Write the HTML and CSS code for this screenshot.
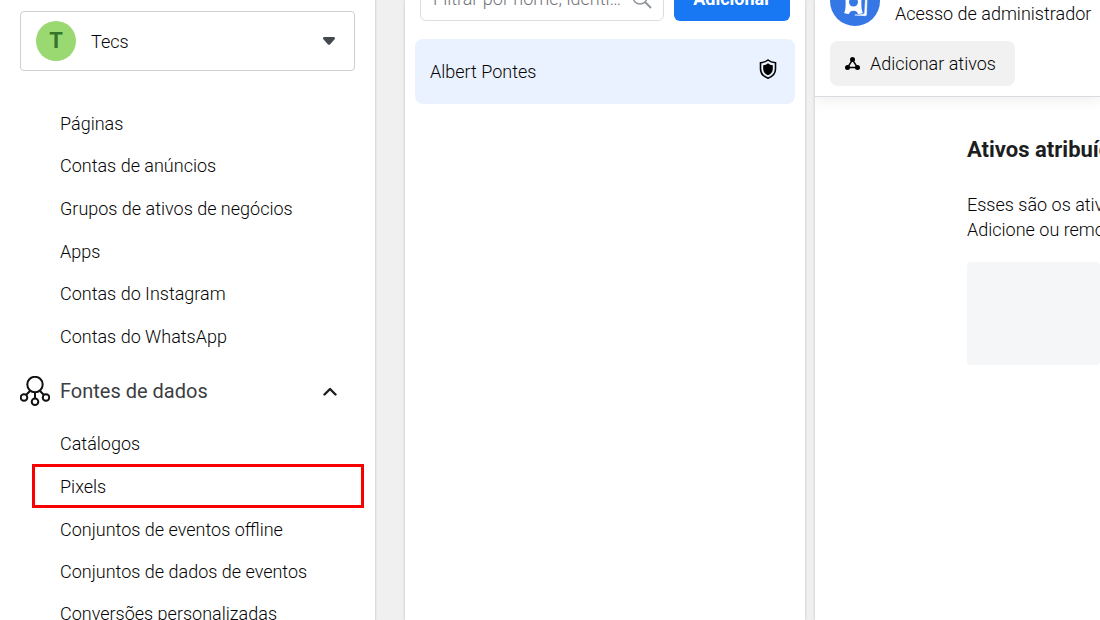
FILE: index.html
```html
<!DOCTYPE html>
<html lang="pt-BR">
<head>
    <meta charset="UTF-8">
    <meta name="viewport" content="width=device-width, initial-scale=1.0">
    <title>Configurações do negócio</title>
    <link rel="stylesheet" href="styles.css">
</head>
<body>
    <nav class="sidebar">
        <button class="account" type="button">
            <span class="account-logo">T</span>
            <span class="account-name">Tecs</span>
            <svg class="caret" width="12" height="8" viewBox="0 0 12 8"><path d="M1.5 0h9q1.5 0 1.5 1.200q0 .8-.6 1.400L7.200 7.200Q6 8.200 4.800 7.200L.6 2.600Q0 2 0 1.200Q0 0 1.500 0z" fill="#444950"/></svg>
        </button>

        <ul class="menu menu-accounts">
            <li><a href="#">Páginas</a></li>
            <li><a href="#">Contas de anúncios</a></li>
            <li><a href="#">Grupos de ativos de negócios</a></li>
            <li><a href="#">Apps</a></li>
            <li><a href="#">Contas do Instagram</a></li>
            <li><a href="#">Contas do WhatsApp</a></li>
        </ul>

        <button class="section" type="button">
            <svg width="30" height="30" viewBox="0 0 30 30" fill="none" stroke="#111" stroke-width="2">
                <circle cx="15" cy="8.500" r="7.700"/>
                <circle cx="4" cy="21.500" r="3.300"/>
                <circle cx="26" cy="21.500" r="3.300"/>
                <circle cx="15" cy="25.700" r="3.300"/>
                <path d="M10 15l-4 4M20 15l4 4M15 16.500v6"/>
            </svg>
            <span class="section-name">Fontes de dados</span>
            <svg class="chevron" width="14" height="9" viewBox="0 0 14 9" fill="none" stroke="#1c1e21" stroke-width="2.400"><path d="M1.500 7.500L7 2l5.500 5.500" stroke-linecap="round" stroke-linejoin="round"/></svg>
        </button>

        <ul class="menu menu-sources">
            <li><a href="#">Catálogos</a></li>
            <li><a class="marked" href="#">Pixels</a></li>
            <li><a href="#">Conjuntos de eventos offline</a></li>
            <li><a href="#">Conjuntos de dados de eventos</a></li>
            <li><a href="#">Conversões personalizadas</a></li>
        </ul>
    </nav>

    <section class="people">
        <div class="toolbar">
            <div class="search">
                <input type="text" placeholder="Filtrar por nome, identificação" aria-label="Filtrar por nome">
                <svg width="20" height="20" viewBox="0 0 20 20" fill="none" stroke="#90949c"><circle cx="8" cy="8" r="7" stroke-width="1.500"/><path d="M13 13l6 6" stroke-width="2"/></svg>
            </div>
            <button class="add" type="button">Adicionar</button>
        </div>
        <button class="person" type="button">
            <span>Albert Pontes</span>
            <svg width="18" height="20" viewBox="0 0 18 20"><path d="M9 1C7 2.700 4 3.500 1.500 3.700V10c0 4.300 3 7.500 7.500 9.200 4.500-1.700 7.500-4.900 7.500-9.200V3.700C14 3.500 11 2.700 9 1z" fill="none" stroke="#050505" stroke-width="1.600"/><path d="M9 4.200C7.700 5.400 6 6 4.200 6.200V10c0 2.900 1.800 5 4.800 6.300 3-1.300 4.800-3.400 4.800-6.300V6.200C12 6 10.300 5.400 9 4.200z"/></svg>
        </button>
    </section>

    <main class="details">
        <header class="profile">
            <div class="profile-row">
                <svg width="50" height="50" viewBox="0 0 50 50">
                    <circle cx="25" cy="25" r="25" fill="#3578e5"/>
                    <path d="M14 37c2.500.8 4 1 5 1 .5-4.500 8.500-4.500 9 0 1.500 0 3-.2 5-1-1.600-3-1.800-6-1.500-15h-16c.3 9 .1 12-1.500 15z" fill="#fff"/>
                    <circle cx="23.500" cy="26" r="4.500" fill="#3578e5"/>
                    <path d="M35.500 22l1.500 1-.5 15.500q0 1.200-1.200 1.200l-10.500-.7q6 0 8.500-.7 1.200-.4 1.400-1.800z" fill="#fff" stroke="#fff" stroke-width=".6"/>
                </svg>
                <p>Acesso de administrador</p>
            </div>
            <button class="assets" type="button">
                <svg width="15" height="13" viewBox="0 0 15 13"><path d="M7.500 2.800L2.500 10.500h10z" fill="none" stroke="#050505" stroke-width="1.500"/><circle cx="7.500" cy="2.500" r="2.500"/><circle cx="2.500" cy="10.500" r="2.500"/><circle cx="12.500" cy="10.500" r="2.500"/></svg>
                Adicionar ativos
            </button>
        </header>
        <div class="assigned">
            <h2>Ativos atribuídos</h2>
            <p>Esses são os ativos<br>Adicione ou remova</p>
            <div class="placeholder"></div>
        </div>
    </main>
</body>
</html>
```

FILE: styles.css
```css
* {
    box-sizing: border-box;
}
body {
    display: flex;
    height: 100vh;
    margin: 0;
    overflow: hidden;
    background: #f0f0f0;
    color: #050505;
    font-family: Roboto, Arial, sans-serif;
    font-size: 18px;
    font-weight: 300;
}
button,
input {
    font: inherit;
    color: inherit;
}
button {
    border: none;
    cursor: pointer;
    text-align: left;
}
svg {
    flex: none;
}
p,
h2 {
    margin: 0;
}

/* Menu lateral */
.sidebar {
    flex: none;
    width: 376px;
    padding: 11px 20px 0;
    background: #fff;
    border-right: 1px solid #dadada;
    box-shadow: 0 0 2px rgba(0, 0, 0, 0.1);
}
.account {
    display: flex;
    align-items: center;
    width: 100%;
    height: 60px;
    padding: 0 19px 0 15px;
    background: #fff;
    border: 1px solid #ccd0d5;
    border-radius: 4px;
}
.account-logo {
    width: 40px;
    height: 40px;
    border-radius: 50%;
    background: #9ad872;
    color: #35752b;
    font-size: 22px;
    font-weight: 700;
    line-height: 40px;
    text-align: center;
}
.account-name {
    flex: 1;
    padding-left: 15px;
}
.menu {
    display: grid;
    grid-auto-rows: 1fr;
    margin: 0 -9px 0 12px;
    padding: 0;
    list-style: none;
}
.menu-accounts {
    height: 256px;
    margin-top: 31px;
}
.menu-sources {
    height: 213px;
    margin-top: 11px;
}
.menu a {
    display: flex;
    align-items: center;
    height: 100%;
    padding-left: 28px;
    color: #050505;
    text-decoration: none;
}
.menu .marked {
    height: 44px;
    padding-left: 25px;
    border: 3px solid #f80000;
}
.section {
    display: flex;
    align-items: center;
    width: 100%;
    height: 40px;
    margin-top: 13px;
    padding: 0 18px 0 0;
    background: none;
    color: #3c3e42;
    font-size: 20px;
    font-weight: 400;
}
.section-name {
    flex: 1;
    padding-left: 10px;
}

/* Lista de pessoas */
.people {
    flex: none;
    width: 400px;
    margin-left: 29px;
    padding: 0 10px;
    background: #fff;
    box-shadow: 0 0 3px rgba(0, 0, 0, 0.2);
}
.toolbar {
    display: flex;
    gap: 10px;
    margin-top: -24px;
    padding: 0 5px;
}
.search {
    display: flex;
    flex: 1;
    align-items: center;
    min-width: 0;
    height: 45px;
    padding: 0 11px 0 12px;
    border: 1px solid #dadde1;
    border-radius: 6px;
}
.search input {
    flex: 1;
    min-width: 0;
    margin-right: 10px;
    padding: 0;
    border: none;
    outline: none;
    text-overflow: ellipsis;
}
.search input::placeholder {
    color: #707378;
}
.add {
    flex: none;
    width: 116px;
    height: 45px;
    border-radius: 6px;
    background: #1877f2;
    color: #fff;
    font-weight: 700;
    text-align: center;
}
.person {
    display: flex;
    align-items: center;
    justify-content: space-between;
    width: 100%;
    height: 65px;
    margin-top: 18px;
    padding: 0 18px 0 15px;
    border-radius: 8px;
    background: #ebf2ff;
}
.person svg {
    margin-bottom: 5px;
}

/* Detalhes */
.details {
    flex: 1;
    min-width: 0;
    margin-left: 10px;
    overflow: hidden;
    background: #fff;
    box-shadow: 0 0 3px rgba(0, 0, 0, 0.2);
}
.profile {
    margin-top: -24px;
    padding: 0 15px 10px;
    border-bottom: 1px solid #d8dbe0;
    box-shadow: 0 0 16px rgba(0, 0, 0, 0.1);
    white-space: nowrap;
}
.profile-row {
    display: flex;
    gap: 15px;
    align-items: flex-end;
}
.profile-row p {
    line-height: 24px;
}
.assets {
    display: flex;
    gap: 10px;
    align-items: center;
    height: 45px;
    margin-top: 15px;
    padding: 0 19px 0 15px;
    border-radius: 8px;
    background: #f1f1f1;
}
.assigned {
    padding: 38px 0 0 152px;
    line-height: 25px;
    white-space: nowrap;
}
.assigned h2 {
    margin-bottom: 27px;
    color: #1c1e21;
    font-size: 22px;
    font-weight: 700;
    line-height: 30px;
}
.placeholder {
    height: 103px;
    margin-top: 20px;
    border-radius: 4px;
    background: #f5f6f7;
}
```
